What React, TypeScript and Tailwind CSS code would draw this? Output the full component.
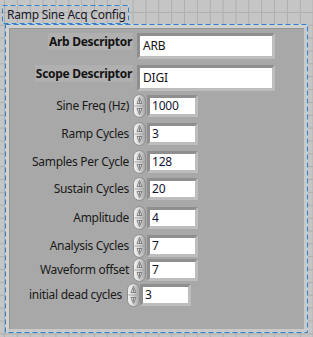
import React from 'react'

function Marquee({ w, h }: { w: number; h: number }) {
  return (
    <svg className="pointer-events-none absolute left-0 top-0" width={w} height={h}>
      <rect x="0.5" y="0.5" width={w - 1} height={h - 1} fill="none" stroke="#b9d8f2" />
      <rect x="0.5" y="0.5" width={w - 1} height={h - 1} fill="none" stroke="#3b7fc3" strokeDasharray="5 3" />
    </svg>
  )
}

function Spinner() {
  return (
    <svg width="13" height="24" viewBox="0 0 13 24" className="shrink-0">
      <defs>
        <linearGradient id="spin" x1="0" x2="1" y1="0" y2="0">
          <stop offset="0" stopColor="#f4f4f4" />
          <stop offset="0.45" stopColor="#dadada" />
          <stop offset="1" stopColor="#a2a2a2" />
        </linearGradient>
      </defs>
      <rect x="0.5" y="0.5" width="12" height="23" rx="6" fill="url(#spin)" stroke="#8e8e8e" />
      <line x1="1.5" y1="12" x2="11.5" y2="12" stroke="#a4a4a4" />
      {/* up arrow */}
      <path d="M4 9.5 L6.5 3.5 L9 9.5 Z" fill="none" stroke="#7c7c7c" strokeWidth="0.9" />
      <line x1="6.5" y1="5.5" x2="6.5" y2="10" stroke="#7c7c7c" strokeWidth="0.9" />
      {/* down arrow */}
      <path d="M4 14.5 L6.5 20.5 L9 14.5 Z" fill="none" stroke="#7c7c7c" strokeWidth="0.9" />
      <line x1="6.5" y1="14" x2="6.5" y2="18.5" stroke="#7c7c7c" strokeWidth="0.9" />
    </svg>
  )
}

function NumField({ value }: { value: string }) {
  return (
    <div className="flex h-[22px] w-[51px] shrink-0 items-center border-[3px] border-t-[#8f8f8f] border-l-[#8f8f8f] border-r-[#bdbdbd] border-b-[#bdbdbd] bg-white pl-[2px] text-[12px] tracking-[-0.2px] text-[#141432]">
      {value}
    </div>
  )
}

function NumRow({ label, value, mt }: { label: string; value: string; mt: string }) {
  return (
    <div className={`flex h-[24px] items-center ${mt}`}>
      <div className="w-[119px] text-right text-[12px] tracking-[-0.3px] text-[#1a1a1a]">{label}</div>
      <div className="ml-[4px]">
        <Spinner />
      </div>
      <div className="ml-[1px]">
        <NumField value={value} />
      </div>
    </div>
  )
}

function DescRow({ label, value, mt }: { label: string; value: string; mt: string }) {
  return (
    <div className={`flex items-start ${mt}`}>
      <div className="flex w-[123px] justify-end">
        <div className="h-[17px] bg-[#b0b0b0] px-[1px] text-[12px] font-bold leading-[17px] tracking-[-0.3px] text-[#141414]">
          {label}
        </div>
      </div>
      <div className="ml-[4px] flex h-[26px] w-[138px] items-center border-[3px] border-t-[#8f8f8f] border-l-[#8f8f8f] border-r-[#bdbdbd] border-b-[#bdbdbd] bg-white pl-[3px] text-[12px] tracking-[-0.2px] text-[#141414]">
        {value}
      </div>
    </div>
  )
}

export default function App() {
  return (
    <div className="h-[337px] w-[313px] overflow-hidden bg-[#c5c5c5] bg-[linear-gradient(90deg,#aeaeae_1px,transparent_1px),linear-gradient(#aeaeae_1px,transparent_1px)] bg-[size:12.87px_12.87px] bg-[position:4px_-1px] pl-[2px] pt-[5px] font-['Noto_Sans',sans-serif]">
      <div className="relative h-[19px] w-[127px] pl-[5px] text-[12px] leading-[19px] tracking-[-0.25px] text-[#1a1a2a]">
        Ramp Sine Acq Config
        <Marquee w={127} h={19} />
      </div>
      <div className="relative ml-[3px] h-[309px] w-[303px] p-[1px]">
        <div className="h-full w-full border-[3px] border-t-[#d2d2d2] border-l-[#d2d2d2] border-r-[#c9c9c9] border-b-[#c9c9c9]">
          <div className="h-full w-full border-l border-t border-[#959595] bg-[#a8a8a8]">
            <DescRow label="Arb Descriptor" value="ARB" mt="mt-[4px]" />
            <DescRow label="Scope Descriptor" value="DIGI" mt="mt-[6px]" />
            <NumRow label="Sine Freq (Hz)" value="1000" mt="mt-[3px]" />
            <NumRow label="Ramp Cycles" value="3" mt="mt-[4px]" />
            <NumRow label="Samples Per Cycle" value="128" mt="mt-[4px]" />
            <NumRow label="Sustain Cycles" value="20" mt="mt-[3px]" />
            <NumRow label="Amplitude" value="4" mt="mt-[5px]" />
            <NumRow label="Analysis Cycles" value="7" mt="mt-[4px]" />
            <NumRow label="Waveform offset" value="7" mt="mt-0" />
            <div className="mt-[1px] flex h-[24px] items-center">
              <div className="w-[112px] text-right text-[12px] tracking-[-0.3px] text-[#1a1a1a]">initial dead cycles</div>
              <div className="ml-[5px]">
                <Spinner />
              </div>
              <div className="ml-0">
                <NumField value="3" />
              </div>
            </div>
          </div>
        </div>
        <Marquee w={303} h={309} />
      </div>
    </div>
  )
}
